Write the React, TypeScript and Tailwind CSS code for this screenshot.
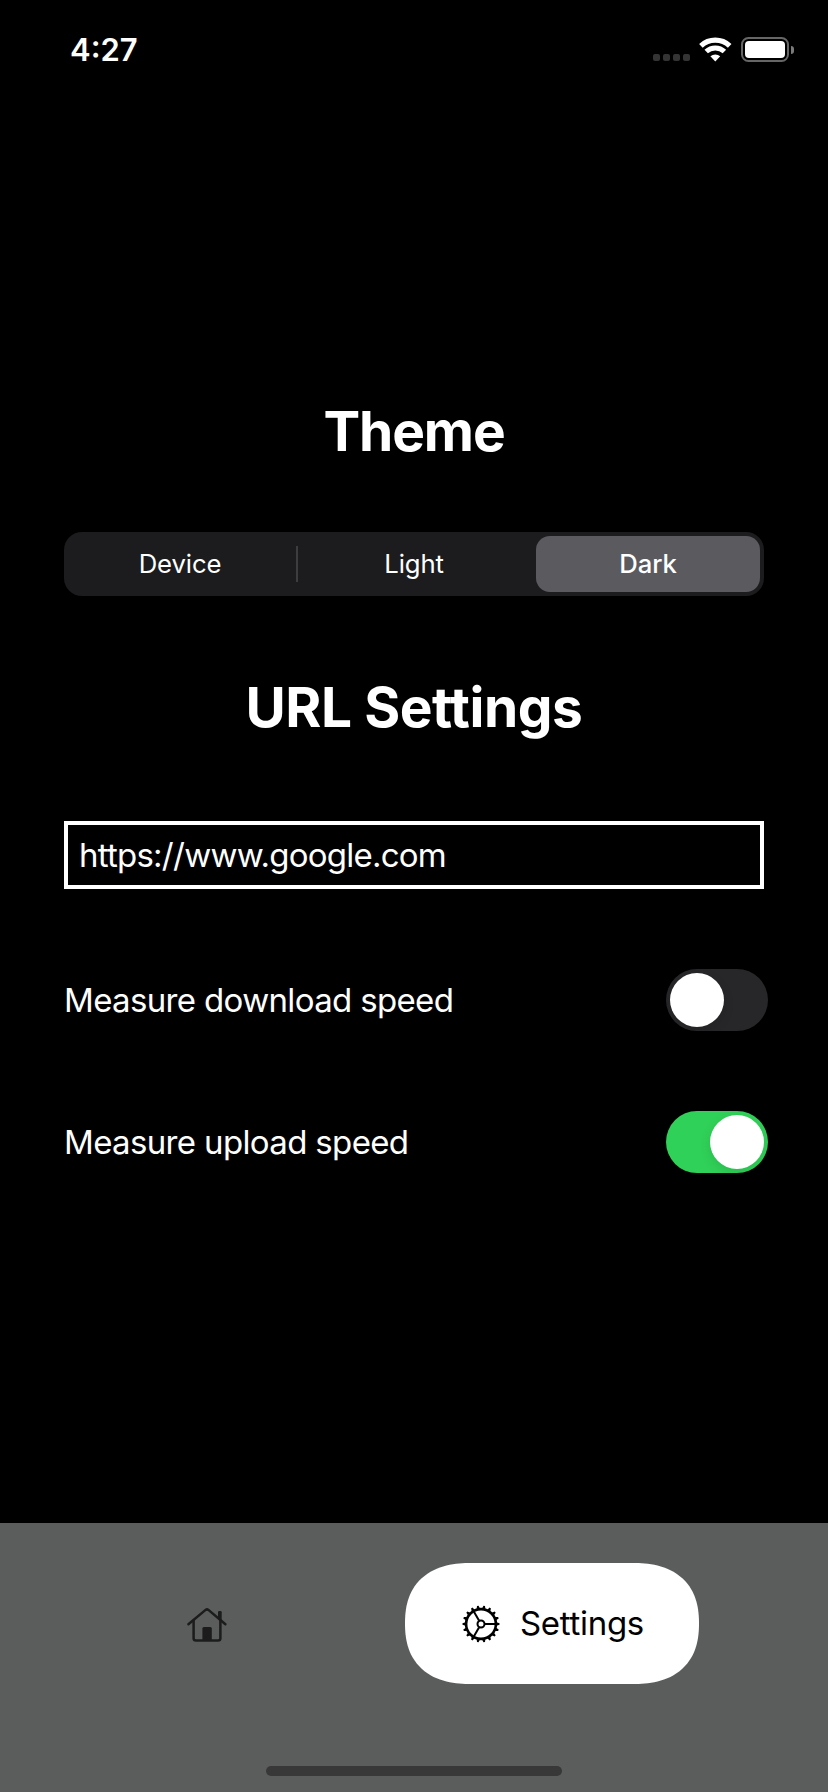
import { Fragment, useState } from "react";

function SignalDots() {
  return (
    <div className="flex h-[7px] gap-[3px]">
      {[0, 1, 2, 3].map((dot) => (
        <span key={dot} className="size-[7px] rounded-[2px] bg-[#343434]" />
      ))}
    </div>
  );
}

function WifiIcon() {
  return (
    <svg className="h-[25px] w-[34px]" viewBox="0 0 34 25" fill="none">
      <path d="M2.9 8.9A21 21 0 0 1 31.7 8.9" stroke="white" strokeWidth="5.2" />
      <path d="M8.2 14.5A13.3 13.3 0 0 1 26.4 14.5" stroke="white" strokeWidth="5" />
      <path d="M17.3 24.4L12.4 19.3A7.2 7.2 0 0 1 22.2 19.3Z" fill="white" />
    </svg>
  );
}

function BatteryIcon() {
  return (
    <div className="flex items-center gap-[2px]">
      <div className="h-[25px] w-[48px] rounded-[7.5px] border-2 border-[#666] p-[2px]">
        <div className="h-full w-full rounded-[4px] bg-white" />
      </div>
      <div className="h-[8px] w-[3px] rounded-r-full bg-[#7a7a7a]" />
    </div>
  );
}

function HomeIcon() {
  return (
    <svg className="h-[36px] w-[42px]" viewBox="0 0 42 36" fill="none" stroke="#1c1c1c" strokeWidth="2.5" strokeLinecap="round" strokeLinejoin="round">
      <path d="M2.4 18.3L19.6 3.9Q21 2.8 22.4 3.9L39.4 18.3" />
      <path d="M7.6 14.5V32.3Q7.6 34.6 10 34.6H32Q34.4 34.6 34.4 32.3V14.5" />
      <path d="M16.4 35V22.5Q16.4 21 17.9 21H24.3Q25.8 21 25.8 22.5V35Z" fill="#1c1c1c" stroke="none" />
      <path d="M32 12V6.3Q32 5 33.3 5H34.4Q35.7 5 35.7 6.3V15Z" fill="#1c1c1c" stroke="none" />
    </svg>
  );
}

const TEETH = Array.from({ length: 18 }, (_, i) => i * 20);

function GearIcon() {
  return (
    <svg className="h-[38px] w-[38px]" viewBox="-19 -19 38 38" fill="none" stroke="black">
      <circle r="14.9" strokeWidth="2.6" />
      <circle r="3.5" strokeWidth="2" />
      {[0, 120, 240].map((angle) => (
        <path key={angle} d="M4 0H15" strokeWidth="2" transform={`rotate(${angle})`} />
      ))}
      {TEETH.map((angle) => (
        <path key={angle} d="M15.5 -1.7L18.5 -0.8V0.8L15.5 1.7Z" fill="black" stroke="none" transform={`rotate(${angle})`} />
      ))}
    </svg>
  );
}

function Toggle({ on, onChange, label }: { on: boolean; onChange: (on: boolean) => void; label: string }) {
  return (
    <button
      role="switch"
      aria-checked={on}
      aria-label={label}
      onClick={() => onChange(!on)}
      className={`flex h-[62px] w-[102px] rounded-full p-1 ${on ? "justify-end bg-[#30d158]" : "justify-start bg-[#272729]"}`}
    >
      <span className="size-[54px] rounded-full bg-white shadow-[0_4px_12px_rgba(0,0,0,0.11)]" />
    </button>
  );
}

const THEMES = ["Device", "Light", "Dark"];

export default function App() {
  const [theme, setTheme] = useState("Dark");
  const [download, setDownload] = useState(false);
  const [upload, setUpload] = useState(true);

  return (
    <div className="flex h-[1792px] w-[828px] flex-col overflow-hidden bg-black font-['Inter','Liberation_Sans',sans-serif] text-white">
      <header className="flex h-[99px] items-center justify-between pr-[34px] pl-[70px]">
        <span className="pb-px text-[31px] leading-none font-semibold">4:27</span>
        <div className="flex h-[25px] items-end gap-[8px]">
          <div className="pb-px">
            <SignalDots />
          </div>
          <div className="flex gap-[9px]">
            <WifiIcon />
            <BatteryIcon />
          </div>
        </div>
      </header>

      <main className="flex flex-1 flex-col px-16 pt-[292px]">
        <h1 className="text-center text-[55px] leading-[80px] font-bold tracking-[-1.1px]">Theme</h1>

        <div className="mt-[61px] flex h-16 items-center rounded-[18px] bg-[#1c1c1e] p-1 text-[25.7px] tracking-[-0.1px]">
          {THEMES.map((name, index) => (
            <Fragment key={name}>
              {index > 0 && (
                <span
                  className={`mx-1 h-9 w-[2px] ${theme === name || theme === THEMES[index - 1] ? "bg-transparent" : "bg-[#3d3d40]"}`}
                />
              )}
              <button
                onClick={() => setTheme(name)}
                className={`h-full flex-1 rounded-[14px] ${theme === name ? "bg-[#5b5a5f] font-medium" : ""}`}
              >
                {name}
              </button>
            </Fragment>
          ))}
        </div>

        <h2 className="mt-[71px] text-center text-[55px] leading-[80px] font-bold tracking-[-0.45px]">URL Settings</h2>

        <input
          defaultValue="https://www.google.com"
          className="mt-[74px] h-[68px] w-full border-4 border-white bg-transparent px-[11px] text-[33px] tracking-[-0.76px] outline-none"
        />

        <div className="mt-20 -mr-1 flex h-[62px] items-center justify-between text-[33px] tracking-[-0.65px]">
          <span className="pt-0.5">Measure download speed</span>
          <Toggle on={download} onChange={setDownload} label="Measure download speed" />
        </div>
        <div className="mt-20 -mr-1 flex h-[62px] items-center justify-between text-[33px] tracking-[-0.65px]">
          <span className="pt-0.5">Measure upload speed</span>
          <Toggle on={upload} onChange={setUpload} label="Measure upload speed" />
        </div>
      </main>

      <footer className="flex h-[269px] flex-col items-center justify-between bg-[#5b5d5c] pt-10 pb-4">
        <nav className="flex w-full items-center pr-[129px] pl-[186px]">
          <button className="flex flex-1 items-center" aria-label="Home">
            <HomeIcon />
          </button>
          <button className="flex h-[121px] w-[294px] items-center gap-[20px] rounded-[66px/60.5px] bg-white pl-[57px] text-[33px] tracking-[-0.3px] text-black [corner-shape:superellipse(1.25)]">
            <GearIcon />
            <span>Settings</span>
          </button>
        </nav>
        <div className="h-[10px] w-[296px] rounded-full bg-[#383838]" />
      </footer>
    </div>
  );
}
